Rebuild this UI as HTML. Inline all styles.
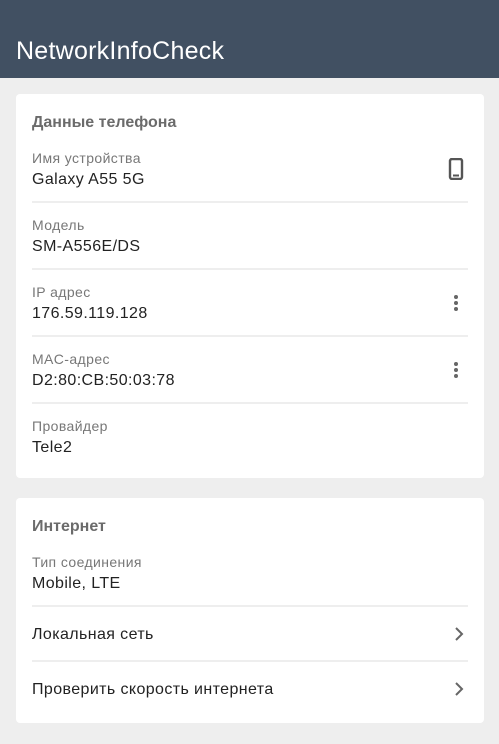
<!DOCTYPE html>
<html><head><meta charset="utf-8"><style>
*{margin:0;padding:0;box-sizing:border-box}
body{width:499px;height:744px;background:#eeeeee;font-family:"Liberation Sans",sans-serif;position:relative;overflow:hidden}
.hdr{position:absolute;left:0;top:0;width:499px;height:78px;background:#415062}
.hdr span{position:absolute;left:16px;top:36px;font-size:25px;color:#fff;line-height:30px;letter-spacing:0.25px}
.card{position:absolute;left:16px;width:468px;background:#fff;border-radius:4px}
.t{position:absolute;left:16px;font-size:16px;font-weight:bold;color:#6b6b6b;margin-top:1px}
.l{position:absolute;left:16px;font-size:14px;color:#777;letter-spacing:0.4px;margin-top:1px}
.v{position:absolute;left:16px;font-size:16px;color:#222;letter-spacing:0.4px;margin-top:1px}
.d{position:absolute;left:16px;width:436px;height:2px;background:#eeeeee}
.ic{position:absolute}
</style></head><body>
<div class="hdr"><span>NetworkInfoCheck</span></div>
<div class="card" style="top:94px;height:384px">
<div class="t" style="top:19px">Данные телефона</div>
<div class="l" style="top:55px">Имя устройства</div><div class="v" style="top:76px">Galaxy A55 5G</div>
<svg class="ic" style="left:432px;top:64px" width="16" height="22" viewBox="0 0 16 22"><rect x="2" y="1" width="12" height="20" rx="2" fill="none" stroke="#555" stroke-width="2.4"/><rect x="5" y="16.5" width="6" height="2" fill="#555"/></svg>
<div class="d" style="top:107px"></div>
<div class="l" style="top:122px">Модель</div><div class="v" style="top:143px">SM-A556E/DS</div>
<div class="d" style="top:174px"></div>
<div class="l" style="top:189px">IP адрес</div><div class="v" style="top:210px">176.59.119.128</div>
<svg class="ic" style="left:436px;top:200px" width="8" height="18"><circle cx="4" cy="3" r="2" fill="#666"/><circle cx="4" cy="9" r="2" fill="#666"/><circle cx="4" cy="15" r="2" fill="#666"/></svg>
<div class="d" style="top:241px"></div>
<div class="l" style="top:256px">MAC-адрес</div><div class="v" style="top:277px">D2:80:CB:50:03:78</div>
<svg class="ic" style="left:436px;top:267px" width="8" height="18"><circle cx="4" cy="3" r="2" fill="#666"/><circle cx="4" cy="9" r="2" fill="#666"/><circle cx="4" cy="15" r="2" fill="#666"/></svg>
<div class="d" style="top:308px"></div>
<div class="l" style="top:323px">Провайдер</div><div class="v" style="top:344px">Tele2</div>
</div>
<div class="card" style="top:498px;height:225px">
<div class="t" style="top:19px">Интернет</div>
<div class="l" style="top:55px">Тип соединения</div><div class="v" style="top:76px">Mobile, LTE</div>
<div class="d" style="top:107px"></div>
<div class="v" style="top:127px">Локальная сеть</div>
<svg class="ic" style="left:438px;top:128px" width="10" height="16"><path d="M2 2l6 6-6 6" fill="none" stroke="#666" stroke-width="2"/></svg>
<div class="d" style="top:162px"></div>
<div class="v" style="top:182px">Проверить скорость интернета</div>
<svg class="ic" style="left:438px;top:183px" width="10" height="16"><path d="M2 2l6 6-6 6" fill="none" stroke="#666" stroke-width="2"/></svg>
</div>
</body></html>
